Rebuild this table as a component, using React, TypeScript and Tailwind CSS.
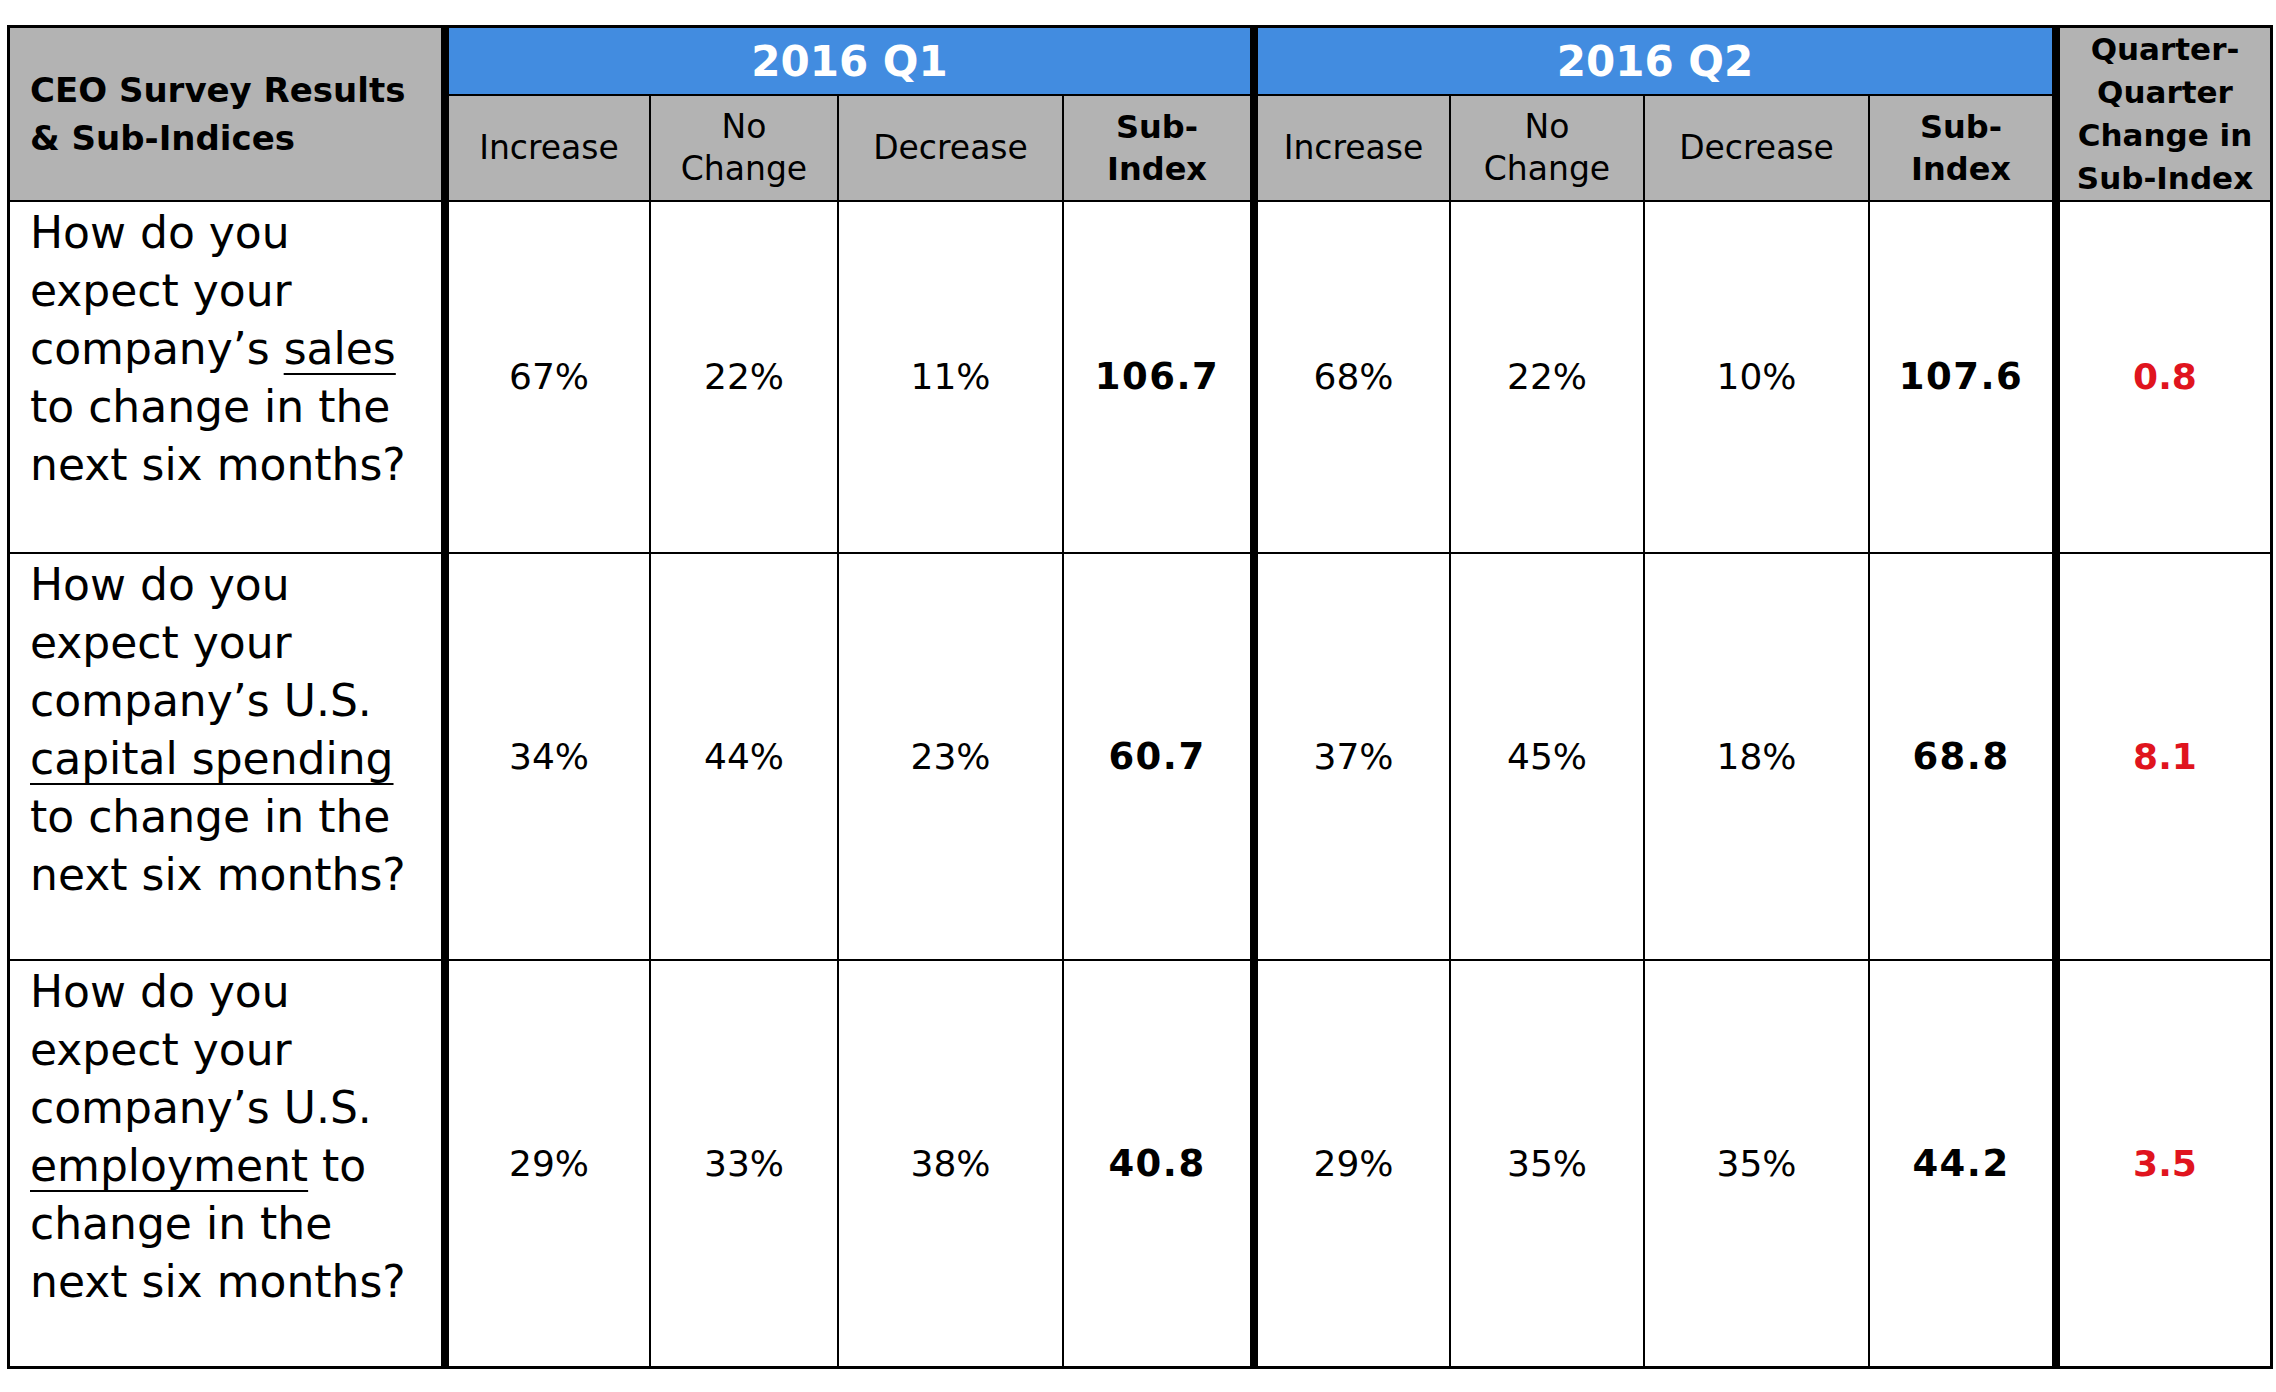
const font = "font-['DejaVu_Sans',sans-serif]";

type Row = {
  lines: React.ReactNode[];
  q1: string[];
  q1Index: string;
  q2: string[];
  q2Index: string;
  change: string;
};

const ul = "underline decoration-2 underline-offset-[9px] [text-decoration-skip-ink:none]";

const rows: Row[] = [
  {
    lines: [
      "How do you",
      "expect your",
      <>
        company’s <span className={ul}>sales</span>
      </>,
      "to change in the",
      "next six months?",
    ],
    q1: ["67%", "22%", "11%"],
    q1Index: "106.7",
    q2: ["68%", "22%", "10%"],
    q2Index: "107.6",
    change: "0.8",
  },
  {
    lines: [
      "How do you",
      "expect your",
      "company’s U.S.",
      <span className={ul}>capital spending</span>,
      "to change in the",
      "next six months?",
    ],
    q1: ["34%", "44%", "23%"],
    q1Index: "60.7",
    q2: ["37%", "45%", "18%"],
    q2Index: "68.8",
    change: "8.1",
  },
  {
    lines: [
      "How do you",
      "expect your",
      "company’s U.S.",
      <>
        <span className={ul}>employment</span> to
      </>,
      "change in the",
      "next six months?",
    ],
    q1: ["29%", "33%", "38%"],
    q1Index: "40.8",
    q2: ["29%", "35%", "35%"],
    q2Index: "44.2",
    change: "3.5",
  },
];

// right border per column: thick rules after the question, Q1 and Q2 blocks
const rightBorder = (i: number) =>
  i === 0 || i === 4 || i === 8 ? "border-r-8" : i === 9 ? "border-r-[3px]" : "border-r-2";

const subHeads = ["Increase", "No\nChange", "Decrease", "Sub-\nIndex"];

export default function App() {
  return (
    <div className={`min-h-screen w-[2276px] bg-white pt-[25px] pl-[7px] ${font} text-black`}>
      <div className="grid w-[2266px] grid-cols-[439px_202px_188px_225px_194px_193px_194px_225px_190px_213px] grid-rows-[68px_106px_352px_407px_408px] border-l-[3px] border-t-[3px] border-black">
        {/* header row 1 */}
        <div className="row-span-2 flex items-center border-b-2 border-r-8 border-black bg-[#b3b3b3] pl-5">
          <div className="text-[34px] font-bold leading-[48px] whitespace-nowrap">
            CEO Survey Results
            <br />
            &amp; Sub-Indices
          </div>
        </div>
        <div className="col-span-4 flex items-center justify-center border-b-2 border-r-8 border-black bg-[#428ce0] text-[42px] font-bold text-white">
          2016 Q1
        </div>
        <div className="col-span-4 flex items-center justify-center border-b-2 border-r-8 border-black bg-[#428ce0] text-[42px] font-bold text-white">
          2016 Q2
        </div>
        <div className="row-span-2 flex items-center justify-center border-b-2 border-r-[3px] border-black bg-[#b3b3b3] text-center text-[31px] font-bold leading-[43px]">
          <div>
            Quarter-
            <br />
            Quarter
            <br />
            Change in
            <br />
            Sub-Index
          </div>
        </div>

        {/* header row 2 */}
        {[0, 1].map((q) =>
          subHeads.map((h, j) => {
            const col = q * 4 + j + 1;
            const bold = j === 3;
            return (
              <div
                key={`${q}-${j}`}
                className={`flex items-center justify-center border-b-2 border-black bg-[#b3b3b3] text-center leading-[42px] whitespace-pre ${rightBorder(col)} ${
                  bold ? "text-[32px] font-bold" : "text-[33px]"
                }`}
              >
                {h}
              </div>
            );
          })
        )}

        {/* data rows */}
        {rows.map((r, ri) => {
          const bottom = ri === rows.length - 1 ? "border-b-[3px]" : "border-b-2";
          const cells = [...r.q1, r.q1Index, ...r.q2, r.q2Index, r.change];
          return [
            <div
              key={`q${ri}`}
              className={`border-black bg-white pl-5 pt-[2px] text-[44px] leading-[58px] whitespace-nowrap ${bottom} ${rightBorder(0)}`}
            >
              {r.lines.map((l, li) => (
                <div key={li}>{l}</div>
              ))}
            </div>,
            ...cells.map((v, ci) => {
              const col = ci + 1;
              const isIndex = col === 4 || col === 8;
              const isChange = col === 9;
              return (
                <div
                  key={`${ri}-${ci}`}
                  className={`flex items-center justify-center border-black bg-white ${bottom} ${rightBorder(col)} ${
                    isIndex ? "text-[37px] font-bold tracking-[0.04em]" : "text-[36px]"
                  } ${isChange ? "font-bold text-[#e0141e]" : ""}`}
                >
                  {v}
                </div>
              );
            }),
          ];
        })}
      </div>
    </div>
  );
}
